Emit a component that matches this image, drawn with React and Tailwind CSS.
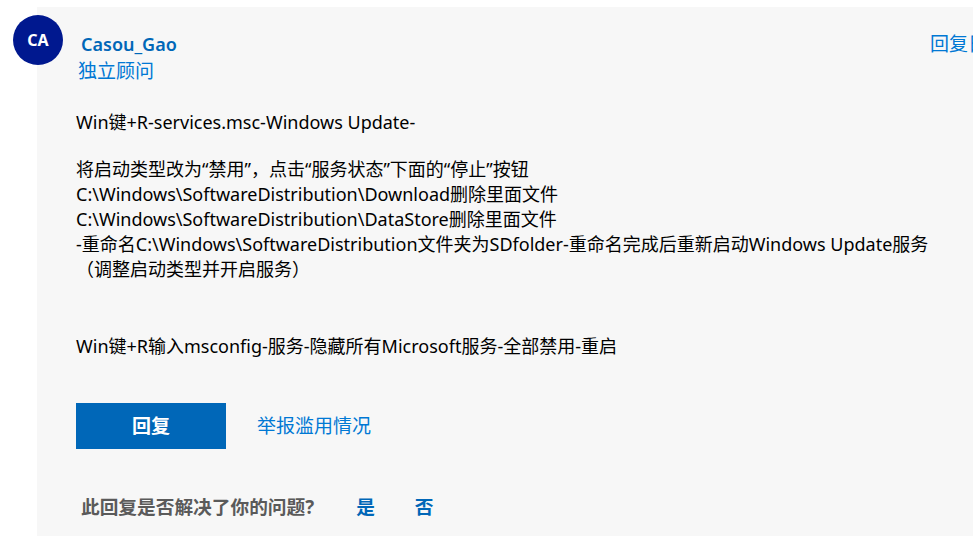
import React from 'react'

const font = { fontFamily: '"Noto Sans", "Noto Sans CJK SC", sans-serif' }

function App() {
  const lines = [
    { t: 'Win键+R-services.msc-Windows Update-', h: 'h-[25px]' },
    { t: '', h: 'h-[22px]' },
    { t: '将启动类型改为“禁用”，点击“服务状态”下面的“停止”按钮', h: 'h-[25px]' },
    { t: 'C:\\Windows\\SoftwareDistribution\\Download删除里面文件', h: 'h-[25px]' },
    { t: 'C:\\Windows\\SoftwareDistribution\\DataStore删除里面文件', h: 'h-[25px]' },
    { t: '-重命名C:\\Windows\\SoftwareDistribution文件夹为SDfolder-重命名完成后重新启动Windows Update服务', h: 'h-[25px]' },
    { t: '（调整启动类型并开启服务）', h: 'h-[25px]' },
    { t: '', h: 'h-[26px]' },
    { t: '', h: 'h-[26px]' },
    { t: 'Win键+R输入msconfig-服务-隐藏所有Microsoft服务-全部禁用-重启', h: 'h-[25px]' },
  ]

  return (
    <div className="min-h-screen w-[973px] h-[536px] overflow-hidden bg-white" style={font}>
      <div className="relative pt-[7px] pl-[37px]">
        {/* avatar sits over the panel edge */}
        <div className="absolute left-[13px] top-[15px] w-[50px] h-[50px] rounded-full bg-[#00188f] flex items-center justify-center">
          <span className="text-white text-[16px] font-bold">CA</span>
        </div>

        <div className="bg-[#f7f7f7] w-[1000px] min-h-[529px] pl-[39px] pr-[64px]">
          <div className="flex justify-between pt-[24px]">
            <div className="flex flex-col">
              <span className="text-[#0067b8] text-[18px] font-semibold leading-[26px] pl-[5px]">Casou_Gao</span>
              <span className="text-[#0078d4] text-[19px] leading-[28px] pl-[2px]">独立顾问</span>
            </div>
            <span className="text-[#0078d4] text-[19px] leading-[26px] whitespace-nowrap mr-[-59px] w-[102px]">回复日期</span>
          </div>

          <div className="mt-[25px] text-[18px] leading-[25px] text-black w-[900px]">
            {lines.map((l, i) => (
              <div key={i} className={`${l.h} whitespace-nowrap`}>{l.t}</div>
            ))}
          </div>

          <div className="flex items-center mt-[44px]">
            <button className="w-[150px] h-[46px] bg-[#0067b8] text-white text-[19px] font-bold">回复</button>
            <span className="ml-[31px] text-[#0078d4] text-[19px]">举报滥用情况</span>
          </div>

          <div className="flex items-center mt-[45px] pl-[5px] text-[18.7px] leading-[26px] font-bold">
            <span className="text-[#5a5a5a]">此回复是否解决了你的问题?</span>
            <span className="ml-[42px] text-[#0067b8]">是</span>
            <span className="ml-[40px] text-[#0067b8]">否</span>
          </div>
        </div>
      </div>
    </div>
  )
}

export default App
